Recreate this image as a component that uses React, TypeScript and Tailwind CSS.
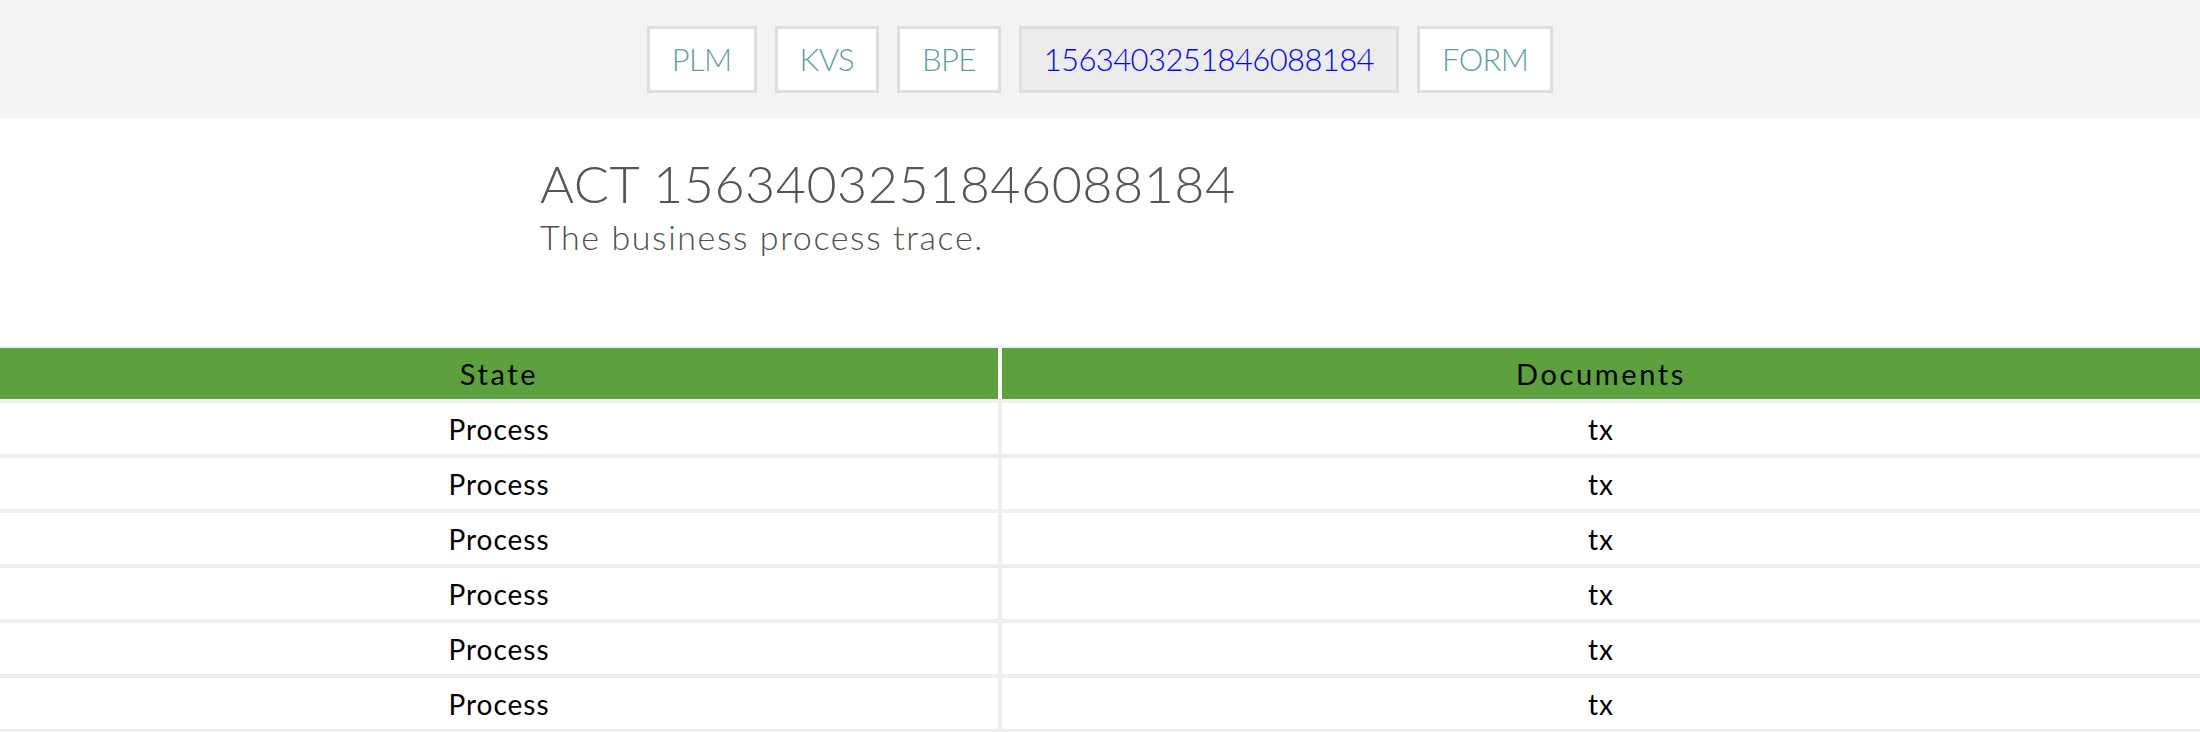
import React from 'react';

const tabs = [
  { label: 'PLM' },
  { label: 'KVS' },
  { label: 'BPE' },
  { label: '1563403251846088184', active: true },
  { label: 'FORM' },
];

const rows = Array.from({ length: 6 }, () => ({ state: 'Process', doc: 'tx' }));

const App: React.FC = () => {
  return (
    <div className="min-h-screen bg-white font-['Lato',sans-serif]">
      {/* top nav */}
      <nav className="h-[118px] bg-[#f3f3f3] flex items-center justify-center gap-[18px]">
        {tabs.map((t) => (
          <a
            key={t.label}
            href="#"
            className={`h-[67px] flex items-center px-[22px] border-[3px] border-[#dedede] text-[31px] tracking-[-0.6px] font-light ${
              t.active ? 'bg-[#ececec] text-[#0000ff]' : 'bg-white text-[#5f9ea0]'
            }`}
          >
            {t.label}
          </a>
        ))}
      </nav>

      {/* title */}
      <div className="max-w-[1120px] mx-auto pt-[34px] text-[#555555] font-light">
        <h1 className="text-[52px] leading-[1.2] tracking-[0.5px]">ACT 1563403251846088184</h1>
        <p className="mt-[3px] text-[34px] leading-[1.2] tracking-[1.6px] text-[#4f4f4f]">The business process trace.</p>
      </div>

      {/* trace table */}
      <div className="mt-[88px] border-t-2 border-[#eeeeee]">
        <div className="flex h-[55px] bg-[#5da13e] border-b-4 border-[#eeeeee] text-[29px] text-black tracking-[2.6px]">
          <div className="w-[1002px] flex items-center justify-center border-r-4 border-white">State</div>
          <div className="flex-1 flex items-center justify-center">Documents</div>
        </div>
        {rows.map((r, i) => (
          <div key={i} className="flex h-[55px] border-b-4 border-[#eeeeee] text-[28px] text-black tracking-[1px]">
            <div className="w-[1002px] flex items-center justify-center border-r-4 border-[#eeeeee]">{r.state}</div>
            <div className="flex-1 flex items-center justify-center">{r.doc}</div>
          </div>
        ))}
      </div>
    </div>
  );
};

export default App;
